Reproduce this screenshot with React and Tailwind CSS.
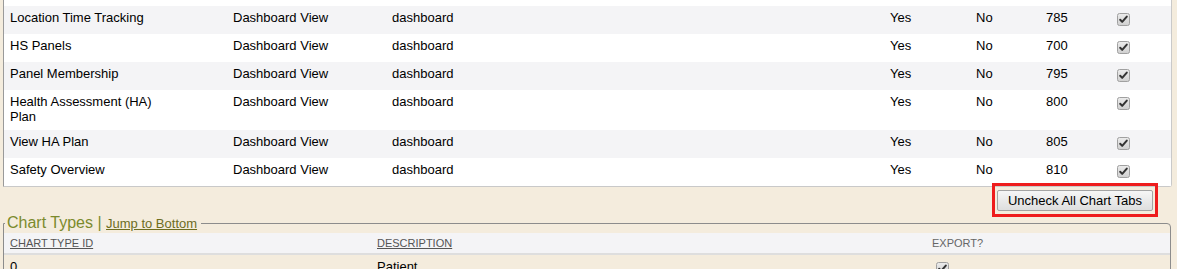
import React from 'react';

const rows = [
  { name: 'Location Time Tracking', view: 'Dashboard View', key: 'dashboard', a: 'Yes', b: 'No', order: 785 },
  { name: 'HS Panels', view: 'Dashboard View', key: 'dashboard', a: 'Yes', b: 'No', order: 700 },
  { name: 'Panel Membership', view: 'Dashboard View', key: 'dashboard', a: 'Yes', b: 'No', order: 795 },
  { name: 'Health Assessment (HA) Plan', view: 'Dashboard View', key: 'dashboard', a: 'Yes', b: 'No', order: 800 },
  { name: 'View HA Plan', view: 'Dashboard View', key: 'dashboard', a: 'Yes', b: 'No', order: 805 },
  { name: 'Safety Overview', view: 'Dashboard View', key: 'dashboard', a: 'Yes', b: 'No', order: 810 },
];

// greyed-out checked box, the old IE/disabled look
const CheckBox = () => (
  <svg width="13" height="13" viewBox="0 0 13 13" className="block">
    <defs>
      <linearGradient id="cbg" x1="0" y1="0" x2="0" y2="1">
        <stop offset="0" stopColor="#ececec" />
        <stop offset="1" stopColor="#cfcfcf" />
      </linearGradient>
    </defs>
    <rect x="0.5" y="0.5" width="12" height="12" rx="2" fill="url(#cbg)" stroke="#a0a0a0" />
    <path d="M3.2 6.8 L5.2 8.9 L9.8 3.6" fill="none" stroke="#333" strokeWidth="2" strokeLinecap="round" strokeLinejoin="round" />
  </svg>
);

const App = () => {
  return (
    <div className="w-[1177px] h-[269px] overflow-hidden bg-[#f4ecdd] font-['Liberation_Sans',Arial,sans-serif] text-[13px] text-black">
      {/* tabs table */}
      <div className="ml-[3px] mr-[5px] bg-white border-l border-r border-b border-l-[#9a9a9a] border-r-[#c9c9c9] border-b-[#c9c9c9] rounded-br-[3px]">
        <div className="h-[6px]" />
        {rows.map((r, i) => (
          <div
            key={r.name}
            className={`grid grid-cols-[223px_159px_498px_86px_70px_71px_1fr] min-h-[28px] leading-[15px] pt-[4px] pb-[6px] ${i % 2 === 0 ? 'bg-[#f4f4f6]' : 'bg-white'}`}
          >
            <div className="pl-[6px]"><div className="w-[155px]">{r.name}</div></div>
            <div className="pl-[6px]">{r.view}</div>
            <div className="pl-[6px]">{r.key}</div>
            <div className="pl-[6px]">{r.a}</div>
            <div className="pl-[6px]">{r.b}</div>
            <div className="pl-[6px]">{r.order}</div>
            <div className="pl-[6px] pt-[3px]"><CheckBox /></div>
          </div>
        ))}
      </div>

      <div className="flex justify-end mr-[24px] mt-[3px]">
        <div className="relative">
          <button className="w-[156px] h-[21px] border border-[#a3a3a3] rounded-[2px] bg-gradient-to-b from-[#f6f6f6] to-[#dedede] text-[13px] text-black leading-none">
            Uncheck All Chart Tabs
          </button>
          <div className="absolute -left-[5px] -right-[5px] -top-[7px] -bottom-[6px] border-[3px] border-[#ee1c1c] pointer-events-none" />
        </div>
      </div>

      <fieldset className="mt-[3px] ml-[3px] mr-[6px] border border-[#8c8c8c] rounded-tr-[4px] h-[200px]">
        <legend className="ml-[1px] pl-[2px] pr-[4px] leading-[18px]">
          <span className="text-[16px] text-[#7b8a2c]">Chart Types | </span>
          <a className="text-[13px] underline text-[#6d6d1f]">Jump to Bottom</a>
        </legend>
        <div className="grid grid-cols-[367px_555px_1fr] h-[22px] items-center bg-[#f4f4f6] border-b-2 border-[#dedede] text-[11px] text-[#555]">
          <div className="pl-[6px] underline">CHART TYPE ID</div>
          <div className="pl-[6px] underline">DESCRIPTION</div>
          <div className="pl-[6px] text-[#666]">EXPORT?</div>
        </div>
        <div className="grid grid-cols-[367px_555px_1fr] pt-[4px] leading-[15px]">
          <div className="pl-[6px]">0</div>
          <div className="pl-[6px]">Patient</div>
          <div className="pl-[10px] pt-[3px]"><CheckBox /></div>
        </div>
      </fieldset>
    </div>
  );
};

export default App;
